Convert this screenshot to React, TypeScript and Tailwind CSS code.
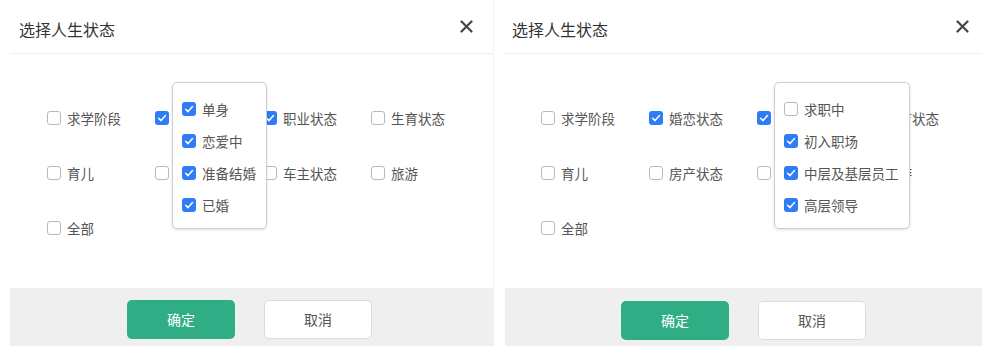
import React from "react";

const FONT = { fontFamily: '"Noto Sans CJK SC", "Noto Sans", sans-serif' };

function Box({ checked }: { checked: boolean }) {
  return checked ? (
    <span className="flex h-[14px] w-[14px] shrink-0 items-center justify-center rounded-[3px] bg-[#2f7cf6]">
      <svg width="14" height="14" viewBox="0 0 14 14">
        <polyline points="3.6,7.2 6,9.6 10.5,4.6" fill="none" stroke="white" strokeWidth="1.5" strokeLinecap="round" strokeLinejoin="round" />
      </svg>
    </span>
  ) : (
    <span className="block h-[14px] w-[14px] shrink-0 rounded-[3px] border border-[#b9b9b9] bg-white" />
  );
}

function Item({ label, checked }: { label: string; checked: boolean }) {
  return (
    <div className="flex items-center gap-[6px] whitespace-nowrap text-[13.5px] leading-[20px] text-[#555]">
      <Box checked={checked} />
      <span>{label}</span>
    </div>
  );
}

const GRID: [string, boolean][][] = [
  [["求学阶段", false], ["婚恋状态", true], ["职业状态", true], ["生育状态", false]],
  [["育儿", false], ["房产状态", false], ["车主状态", false], ["旅游", false]],
  [["全部", false]],
];

type PanelProps = {
  width: string;
  titlePad: string;
  closePad: string;
  gridPad: string;
  popLeft: string;
  popWidth: string;
  footerPad: string;
  items: [string, boolean][];
  extra?: string;
};

function Panel(p: PanelProps) {
  return (
    <div className={`flex h-[346px] flex-col bg-white ${p.width} ${p.extra ?? ""}`}>
      <div className="flex h-[54px] shrink-0 items-center justify-between border-b border-[#eeeeee]">
        <span className={`pt-[4px] text-[16px] leading-[24px] text-[#333] ${p.titlePad}`}>选择人生状态</span>
        <span className={`pb-[1px] ${p.closePad}`}>
          <svg width="13" height="13" viewBox="0 0 13 13">
            <path d="M1.5 1.5 L11.5 11.5 M11.5 1.5 L1.5 11.5" stroke="#444" strokeWidth="2.2" strokeLinecap="round" />
          </svg>
        </span>
      </div>
      <div className={`relative h-[234px] shrink-0 pt-[36px] ${p.gridPad}`}>
        {GRID.map((row, i) => (
          <div key={i} className="grid h-[55px] grid-cols-[108px_108px_108px_108px] items-center">
            {row.map(([l, c]) => (
              <Item key={l} label={l} checked={c} />
            ))}
          </div>
        ))}
        <div
          className={`absolute top-[28px] h-[147px] rounded-[5px] border border-[#cfcfcf] bg-white pl-[9px] pt-[10px] shadow-[0_1px_3px_rgba(0,0,0,0.12)] ${p.popLeft} ${p.popWidth}`}
        >
          {p.items.map(([l, c]) => (
            <div key={l} className="flex h-[32px] items-center">
              <Item label={l} checked={c} />
            </div>
          ))}
        </div>
      </div>
      <div className={`flex h-[58px] shrink-0 items-start justify-center gap-[29px] bg-[#efefef] ${p.footerPad}`}>
        <button className="h-[39px] w-[108px] rounded-[5px] bg-[#2fae86] text-[14px] text-white">确定</button>
        <button className="h-[39px] w-[108px] rounded-[5px] border border-[#dcdcdc] bg-white text-[14px] text-[#555]">取消</button>
      </div>
    </div>
  );
}

export default function App() {
  return (
    <div className="flex h-[356px] w-[992px] bg-white pl-[10px]" style={FONT}>
      <Panel
        width="w-[484px]"
        titlePad="pl-[9px]"
        closePad="pr-[20px]"
        gridPad="pl-[37px]"
        popLeft="left-[162px]"
        popWidth="w-[95px]"
        footerPad="pt-[12px] pr-[4px]"
        extra="border-r border-[#f2f2f2]"
        items={[["单身", true], ["恋爱中", true], ["准备结婚", true], ["已婚", true]]}
      />
      <div className="w-[11px]" />
      <Panel
        width="w-[477px]"
        titlePad="pl-[7px]"
        closePad="pr-[13px]"
        gridPad="pl-[36px]"
        popLeft="left-[269px]"
        popWidth="w-[136px]"
        footerPad="pt-[13px]"
        items={[["求职中", false], ["初入职场", true], ["中层及基层员工", true], ["高层领导", true]]}
      />
    </div>
  );
}
